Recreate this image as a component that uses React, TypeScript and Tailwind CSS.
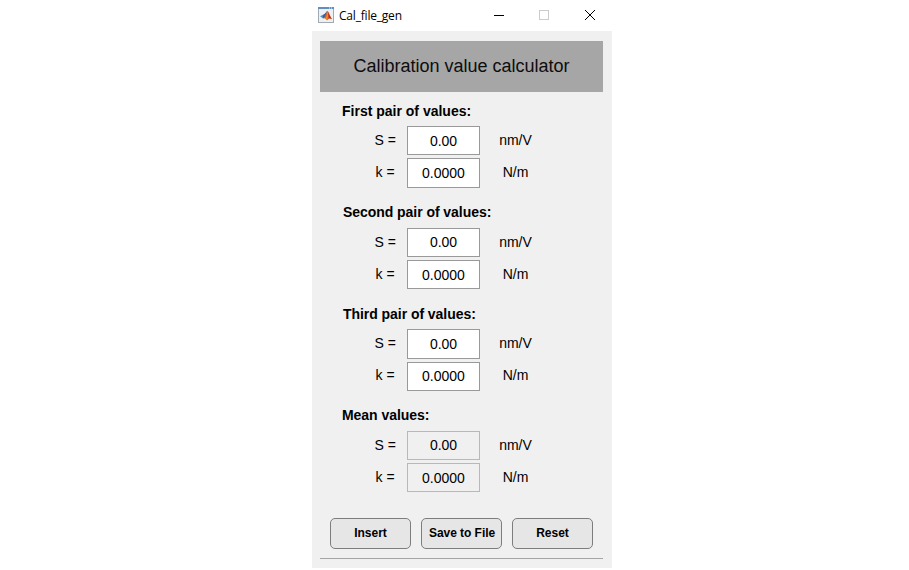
type Row = { label: string; value: string; unit: string; box: string; labelPad: string; valuePad: string; unitPad: string };
type Group = { title: string; head: string; rows: Row[]; disabled?: boolean };

const s = (box: string, valuePad = ""): Row => ({
  label: "S =",
  value: "0.00",
  unit: "nm/V",
  box,
  labelPad: "pl-[62.5px] pt-[6px]",
  valuePad,
  unitPad: "pt-[6px]",
});
const k = (box: string, valuePad = "", top = "pt-[6px]"): Row => ({
  label: "k =",
  value: "0.0000",
  unit: "N/m",
  box,
  labelPad: "pl-[63.5px] " + top,
  valuePad,
  unitPad: top,
});

const groups: Group[] = [
  { title: "First pair of values:", head: "h-[34px] pl-[30px] pb-[7px]", rows: [s("h-[29px]"), k("h-[30px] mt-[3px]")] },
  {
    title: "Second pair of values:",
    head: "h-[40px] pl-[31px] pb-[8px] tracking-[-0.05px]",
    rows: [s("h-[29px]", "pb-[2px]"), k("h-[29px] mt-[3px]")],
  },
  {
    title: "Third pair of values:",
    head: "h-[40px] pl-[31px] pb-[7px] tracking-[-0.05px]",
    rows: [s("h-[30px]"), k("h-[29px] mt-[3px]", "pb-[2px]", "pt-[5px]")],
  },
  {
    title: "Mean values:",
    head: "h-[40px] pl-[30px] pb-[8px] tracking-[-0.05px]",
    rows: [s("h-[29px]", "pb-[2px]"), k("h-[29px] mt-[3px]")],
    disabled: true,
  },
];

const buttons = [
  { text: "Insert", pad: "" },
  { text: "Save to File", pad: "pl-[7px]" },
  { text: "Reset", pad: "" },
];

function TitleBar() {
  return (
    <header className="flex h-[31px] items-start bg-white pl-[6px]">
      <svg className="mt-[7px] h-4 w-4 shrink-0" viewBox="0 0 16 16">
        <rect x="0.5" y="0.5" width="15" height="15" fill="#eef1f4" stroke="#a3a9b0" />
        <path d="M0 0h16v2H0z" fill="#5f8fc0" />
        <path d="M11 0.500h1v1h-1zM13 0.500h1v1h-1z" fill="#e8f2ff" />
        <path d="M2 9.300l3.500-1.700L7 9.500 4.800 11.300z" fill="#4b8fc7" />
        <path d="M5.300 7.800C7 7.300 8 5 9.300 3.800L7.500 9.500 5.500 11.300 4.800 11.300z" fill="#2f609a" />
        <path d="M9.300 3.800C11 5 12 9 14 12.200c-2-1.300-3-1-5 1.200C8 11.500 7 10.800 4.800 11.300c2-.6 3-3.500 4.500-7.500z" fill="#d95a27" />
        <path d="M9.300 3.800C9 7 8.500 9.500 7.500 11.300L9 13.200c1.300-2.500 1.200-6 .3-9.400z" fill="#f08a30" />
        <path d="M10 4.500c.8 2.500 1.800 5 4 7.700-1.500-.9-2.200-1.100-3-.7z" fill="#a5301f" />
      </svg>
      <span className="ml-[5px] mt-[8px] w-[150px] whitespace-nowrap font-['Open_Sans',sans-serif] text-[12px] leading-4 tracking-[-0.2px] text-black">
        Cal_file_gen
      </span>
      <svg className="mt-[9px] h-3 w-[106px]" viewBox="0 0 106 12" fill="none" shapeRendering="crispEdges">
        <path d="M5 6.500h10" stroke="#000" />
        <rect x="50.5" y="1.500" width="9" height="9" stroke="#ccc" />
        <path d="M96 1l10 10M106 1l-10 10" stroke="#000" shapeRendering="auto" />
      </svg>
    </header>
  );
}

export default function App() {
  return (
    <main className="flex h-[570px] w-full justify-center overflow-hidden bg-white pl-[15px] font-['Liberation_Sans',Arial,sans-serif] text-black">
      <div className="w-[300px] shrink-0">
        <TitleBar />
        <div className="h-[537px] bg-[#f0f0f0] pt-[10px]">
          <h1 className="ml-2 flex h-[51px] w-[283px] items-center justify-center bg-[#a6a6a6] pb-[2px] text-[18px] leading-5 text-[#0d0d0d]">
            Calibration value calculator
          </h1>
          {groups.map((g) => (
            <section key={g.title}>
              <h2 className={"flex items-end text-[14px] font-bold leading-4 " + g.head}>{g.title}</h2>
              {g.rows.map((r) => (
                <div key={r.label} className={"flex text-[14px] leading-4 " + r.box}>
                  <span className={"w-[95px] shrink-0 whitespace-nowrap " + r.labelPad}>{r.label}</span>
                  <input
                    readOnly
                    disabled={g.disabled}
                    value={r.value}
                    className={
                      "h-full w-[73px] border text-center leading-4 text-black " +
                      r.valuePad +
                      (g.disabled ? " border-[#b8b8b8] bg-[#f0f0f0]" : " border-[#999] bg-white")
                    }
                  />
                  <span className={"w-[71px] text-center " + r.unitPad}>{r.unit}</span>
                </div>
              ))}
            </section>
          ))}
          <div className="mt-[26px] flex gap-[10px] pl-[18px]">
            {buttons.map((b) => (
              <button
                key={b.text}
                className={
                  "flex h-[31px] w-[81px] items-center whitespace-nowrap rounded-[5px] border border-[#7d7d7d] bg-[#e6e6e6] pb-[2px] text-[12px] font-bold leading-4 " +
                  (b.pad ? "justify-start tracking-[-0.05px] " + b.pad : "justify-center")
                }
              >
                {b.text}
              </button>
            ))}
          </div>
          <div className="ml-2 mt-[9px] h-px w-[283px] bg-[#a6a6a6]" />
        </div>
      </div>
    </main>
  );
}
